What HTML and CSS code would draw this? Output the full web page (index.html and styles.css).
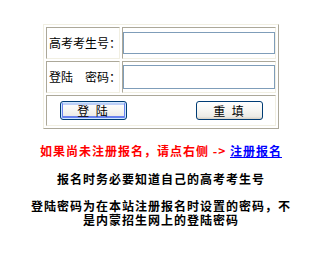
FILE: index.html
```html
<!DOCTYPE html>
<html lang="zh-CN">
<head>
<meta charset="utf-8">
<title>登陆</title>
<link rel="stylesheet" href="styles.css">
</head>
<body>
<div class="page">
  <form class="login" action="#" onsubmit="return false;">
    <table class="login-table">
      <tr>
        <td class="label">高考考生号<span class="punct">：</span></td>
        <td class="field"><input class="text-input" type="text" name="ksh"></td>
      </tr>
      <tr>
        <td class="label">登陆　密码<span class="punct">：</span></td>
        <td class="field"><input class="text-input tall" type="password" name="pwd"></td>
      </tr>
      <tr>
        <td class="actions" colspan="2">
          <div class="buttons">
            <button class="btn btn-default" type="submit">登 陆</button>
            <button class="btn" type="reset">重 填</button>
          </div>
        </td>
      </tr>
    </table>
  </form>
  <p class="notice">如果尚未注册报名<span class="punct">，</span>请点右侧 -&gt; <a class="reg-link" href="#">注册报名</a></p>
  <p class="note note-first">报名时务必要知道自己的高考考生号</p>
  <p class="note note-second">登陆密码为在本站注册报名时设置的密码<span class="punct">，不</span>是内蒙招生网上的登陆密码</p>
</div>
</body>
</html>
```
FILE: styles.css
```css
html, body {
  margin: 0;
  padding: 0;
  background: #ffffff;
}

body {
  font-family: "Noto Sans CJK SC", "Noto Sans", sans-serif;
  font-size: 12px;
  color: #000000;
}

.page {
  width: 306px;
  margin-left: 8px;
  padding-top: 24px;
}

.punct {
  font-family: "Noto Sans CJK TC", "Noto Sans CJK SC", sans-serif;
}

.login {
  margin: 0;
}

.login-table {
  width: 236px;
  margin: 0 auto;
  border-collapse: separate;
  border-spacing: 2px;
  border-style: solid;
  border-width: 1px;
  border-color: #f1efe2 #aca899 #aca899 #f1efe2;
  table-layout: fixed;
}

.login-table td {
  padding: 0;
  border-style: solid;
  border-width: 1px;
  border-color: #aca899 #f1efe2 #f1efe2 #aca899;
  height: 30px;
  vertical-align: middle;
}

.label {
  width: 70px;
  padding-left: 2px !important;
  white-space: nowrap;
  line-height: 14px;
}

.field {
  width: 152px;
}

.text-input {
  display: block;
  box-sizing: border-box;
  width: 152px;
  height: 22px;
  margin: 0;
  padding: 1px 2px;
  border: 1px solid #7f9db9;
  background: #ffffff;
  font: inherit;
  outline: none;
}

.text-input.tall {
  height: 24px;
}

.login-table td.actions {
  height: 29px;
}

.buttons {
  display: flex;
  justify-content: space-between;
  padding: 0 12px 0 13px;
}

.btn {
  box-sizing: border-box;
  width: 67px;
  height: 19px;
  margin: 0;
  padding: 0;
  border: 1px solid #003c74;
  border-radius: 3px;
  background: linear-gradient(#ffffff 0%, #f7f7f4 45%, #ecebe6 85%, #d6d0c5 100%);
  font-family: "Noto Sans CJK SC", sans-serif;
  font-size: 12px;
  line-height: 15px;
  color: #000000;
  letter-spacing: 2px;
}

.btn-default {
  box-shadow: inset 0 0 0 1px #cee7ff, inset 0 -1px 0 2px #6982ee, inset 0 1px 0 2px #bccff7;
}

.notice {
  margin: 15px 0 0;
  line-height: 14px;
  text-align: center;
  font-weight: bold;
  color: #ff0000;
  letter-spacing: 1px;
}

.reg-link {
  color: #0000ff;
  text-decoration: underline;
}

.note {
  width: 266px;
  margin: 14px auto 0;
  line-height: 14px;
  text-align: center;
  font-weight: bold;
  letter-spacing: 1px;
}

.note-second {
  margin-top: 13px;
}
```
